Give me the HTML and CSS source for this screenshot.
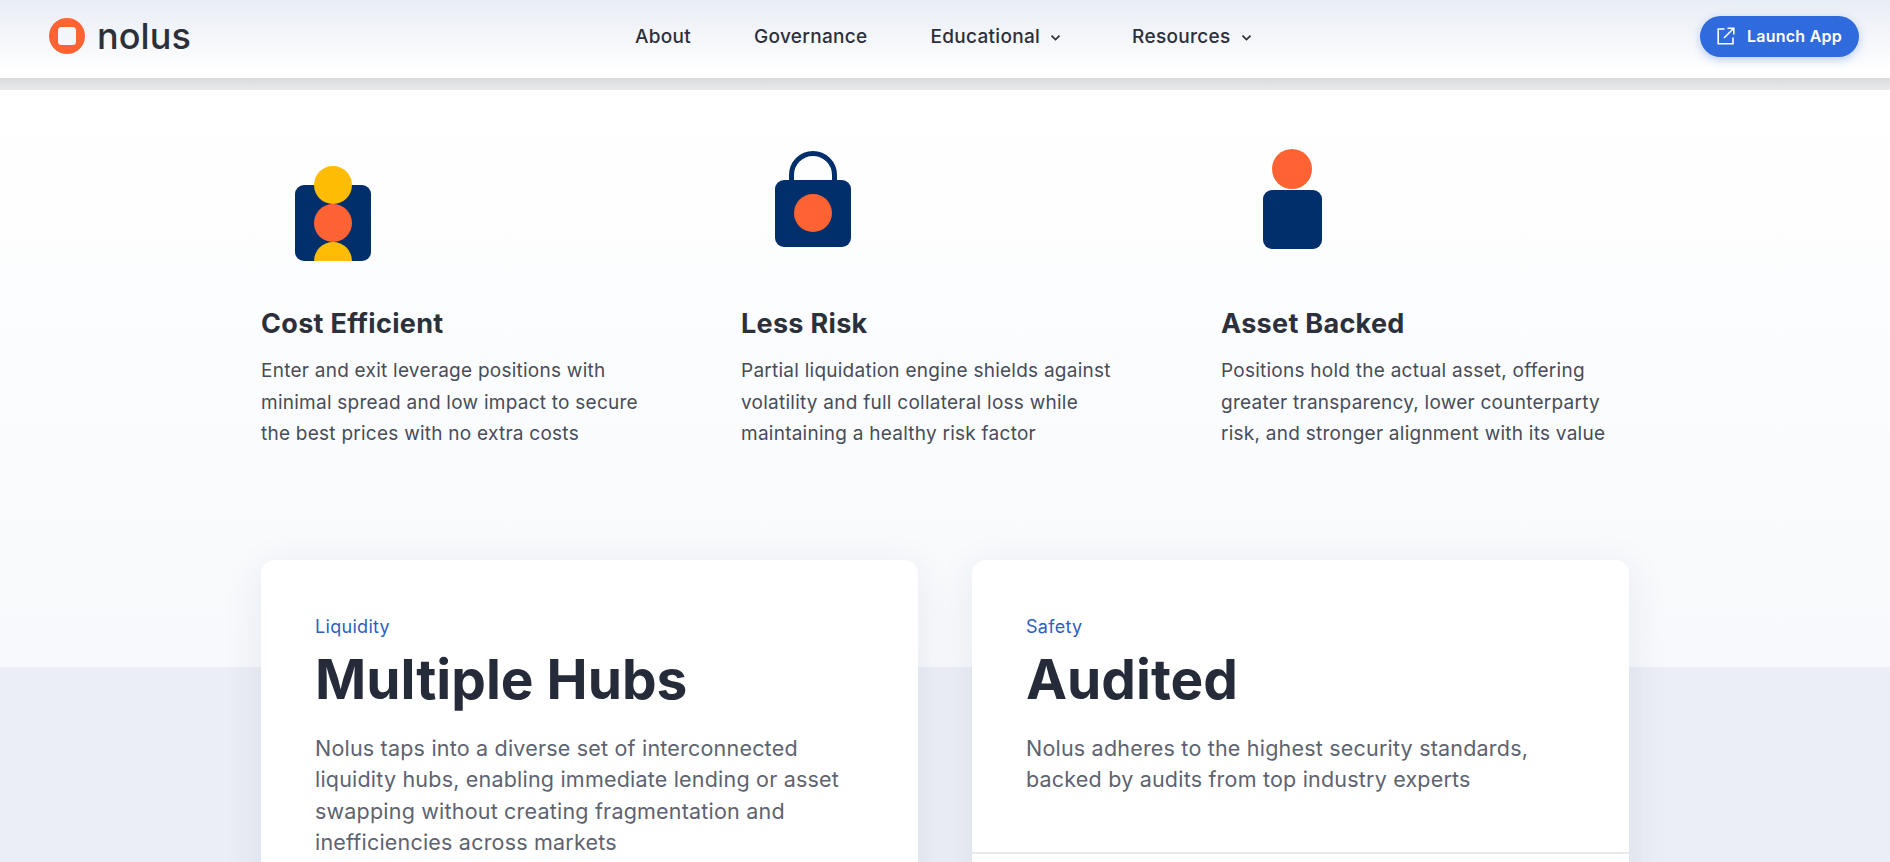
FILE: index.html
```html
<!DOCTYPE html>
<html lang="en">
<head>
<meta charset="utf-8">
<title>Nolus</title>
<link rel="stylesheet" href="styles.css">
</head>
<body>
<header class="header">
  <a class="logo" href="#">
    <svg class="logo-mark" width="36" height="36" viewBox="0 0 36 36"><circle cx="18" cy="18" r="18" fill="#ff6333"/><rect x="9" y="9" width="18" height="18" rx="3.5" fill="#f3f5f9"/></svg>
    <span class="logo-text">nolus</span>
  </a>
  <nav class="nav">
    <a class="nav-link nav-about" href="#">About</a>
    <a class="nav-link nav-gov" href="#">Governance</a>
    <a class="nav-link nav-edu" href="#">Educational
      <svg class="chev" width="11" height="8" viewBox="0 0 11 8"><path d="M1.5 1.6 5.5 5.6l4-4" fill="none" stroke="#2b303b" stroke-width="1.7"/></svg>
    </a>
    <a class="nav-link" href="#">Resources
      <svg class="chev" width="11" height="8" viewBox="0 0 11 8"><path d="M1.5 1.6 5.5 5.6l4-4" fill="none" stroke="#2b303b" stroke-width="1.7"/></svg>
    </a>
  </nav>
  <a class="launch" href="#">
    <svg width="18" height="18" viewBox="0 0 18 18" fill="none" stroke="#fff" stroke-width="1.6"><path d="M7.5 2H1.2v14.8H16v-6.3"/><path d="M7 11 16.2 1.8M10.5 1.2h6.3v6.3"/></svg>
    <span>Launch App</span>
  </a>
</header>
<div class="header-shade"></div>
<main class="main">
  <section class="features">
    <article class="feature">
      <svg class="feature-icon" width="144" height="120" viewBox="0 0 144 120"><defs><clipPath id="c1"><rect x="34" y="40" width="76" height="76" rx="9"/></clipPath></defs><rect x="34" y="40" width="76" height="76" rx="9" fill="#012f6b"/><g clip-path="url(#c1)"><circle cx="72" cy="116" r="19" fill="#ffbc05"/></g><circle cx="72" cy="78" r="19" fill="#ff6333"/><circle cx="72" cy="40" r="19" fill="#ffbc05"/></svg>
      <h3 class="feature-title">Cost Efficient</h3>
      <p class="feature-text">Enter and exit leverage positions with<br>minimal spread and low impact to secure<br>the best prices with no extra costs</p>
    </article>
    <article class="feature">
      <svg class="feature-icon" width="144" height="120" viewBox="0 0 144 120"><path d="M50.5 38V30a21.5 21.5 0 0 1 43 0v8" fill="none" stroke="#012f6b" stroke-width="5"/><rect x="34" y="35" width="76" height="67" rx="9" fill="#012f6b"/><circle cx="72" cy="68" r="19" fill="#ff6333"/></svg>
      <h3 class="feature-title">Less Risk</h3>
      <p class="feature-text">Partial liquidation engine shields against<br>volatility and full collateral loss while<br>maintaining a healthy risk factor</p>
    </article>
    <article class="feature">
      <svg class="feature-icon" width="144" height="120" viewBox="0 0 144 120"><circle cx="71" cy="24" r="20" fill="#ff6333"/><rect x="42" y="45" width="59" height="59" rx="9" fill="#012f6b"/></svg>
      <h3 class="feature-title">Asset Backed</h3>
      <p class="feature-text">Positions hold the actual asset, offering<br>greater transparency, lower counterparty<br>risk, and stronger alignment with its value</p>
    </article>
  </section>
  <section class="cards">
    <article class="card">
      <div class="card-body">
        <p class="card-eyebrow">Liquidity</p>
        <h2 class="card-title">Multiple Hubs</h2>
        <p class="card-text">Nolus taps into a diverse set of interconnected<br>liquidity hubs, enabling immediate lending or asset<br>swapping without creating fragmentation and<br>inefficiencies across markets</p>
      </div>
    </article>
    <article class="card">
      <div class="card-body">
        <p class="card-eyebrow">Safety</p>
        <h2 class="card-title">Audited</h2>
        <p class="card-text">Nolus adheres to the highest security standards,<br>backed by audits from top industry experts</p>
      </div>
      <div class="card-foot"></div>
    </article>
  </section>
</main>
</body>
</html>
```
FILE: styles.css
```css
* { box-sizing: border-box; }
html, body { margin: 0; height: 100%; overflow: hidden; }
body { font-family: Inter, "Noto Sans", sans-serif; background: #ebeef5; color: #2b303b; }
a { color: inherit; text-decoration: none; }
h2, h3, p { margin: 0; }

.header {
  height: 78px;
  display: flex;
  align-items: center;
  padding: 0 31px 6px 49px;
  background: linear-gradient(#e9edf5, #fafbfd 58px, #fff 70px);
}
.logo { display: flex; align-items: center; gap: 12px; width: 586px; }
.logo-mark { display: block; flex: none; }
.logo-text { font-size: 36px; font-weight: 500; line-height: 36px; letter-spacing: .1px; color: #2b303b; }
.nav { display: flex; align-items: center; flex: 1; font-size: 19px; letter-spacing: .3px; font-weight: 500; }
.nav-link { display: flex; align-items: center; gap: 10px; color: #2b303b; }
.nav-about { margin-right: 63px; }
.nav-gov { margin-right: 63px; }
.nav-edu { margin-right: 71px; }
.chev { display: block; margin-top: 3px; }
.launch {
  width: 159px;
  height: 41px;
  border-radius: 21px;
  background: #2f6bdc;
  color: #fff;
  display: flex;
  align-items: center;
  justify-content: center;
  gap: 12px;
  font-size: 16px;
  letter-spacing: .25px;
  font-weight: 600;
  box-shadow: 0 3px 10px rgba(47, 107, 220, .3);
}
.header-shade { height: 12px; background: linear-gradient(#d9dbdd, #e8eaed); }

.main {
  height: 772px;
  overflow: hidden;
  background: linear-gradient(#fff, #f7f9fc 577px, #ebeef5 577px);
}
.features {
  display: grid;
  grid-template-columns: repeat(3, 480px);
  padding: 55px 0 0 261px;
}
.feature-icon { display: block; }
.feature-title { margin-top: 41px; font-size: 27px; letter-spacing: .3px; line-height: 36px; font-weight: 700; color: #2b303b; }
.feature-text { margin-top: 13px; font-size: 19px; letter-spacing: .25px; line-height: 31.5px; color: #474d59; }

.cards {
  display: grid;
  grid-template-columns: repeat(2, 657px);
  column-gap: 54px;
  padding: 110px 0 0 261px;
}
.card {
  background: #fff;
  border-radius: 14px;
  box-shadow: 0 8px 40px rgba(40, 60, 100, .09);
  min-height: 400px;
}
.card-body { height: 292px; padding: 53px 54px 0; }
.card-eyebrow { font-size: 18px; line-height: 27px; letter-spacing: .3px; color: #2c5fc0; }
.card-title { margin-top: 5px; font-size: 55px; line-height: 68px; font-weight: 700; color: #262b3a; }
.card-text { margin-top: 20px; font-size: 21.5px; letter-spacing: .2px; line-height: 31.5px; color: #5d6370; }
.card-foot { border-top: 2px solid #e6e9ef; }
```
